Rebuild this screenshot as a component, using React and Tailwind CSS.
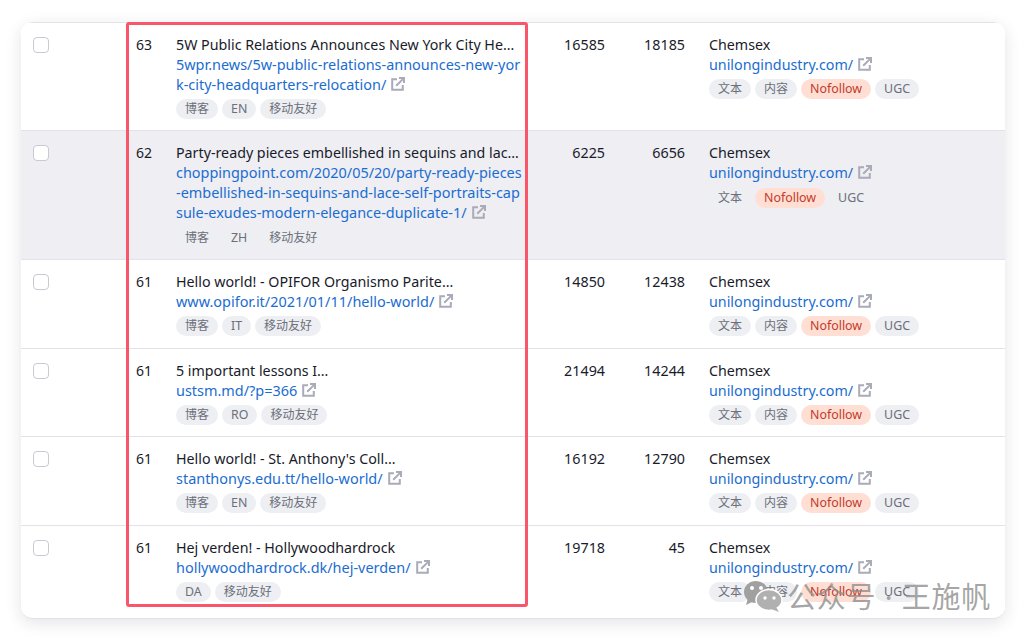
import React from "react";

const rows = [
  {
    score: 63,
    title: "5W Public Relations Announces New York City Headquarters Relocation",
    url: ["5wpr.news/5w-public-relations-announces-new-yor", "k-city-headquarters-relocation/"],
    tags: ["博客", "EN", "移动友好"],
    a: 16585,
    b: 18185,
    h: "h-[108px]",
  },
  {
    score: 62,
    title: "Party-ready pieces embellished in sequins and lace self portraits",
    url: [
      "choppingpoint.com/2020/05/20/party-ready-pieces",
      "-embellished-in-sequins-and-lace-self-portraits-cap",
      "sule-exudes-modern-elegance-duplicate-1/",
    ],
    tags: ["博客", "ZH", "移动友好"],
    a: 6225,
    b: 6656,
    h: "h-[129px]",
    hover: true,
    linkTags: ["文本", "Nofollow", "UGC"],
  },
  {
    score: 61,
    title: "Hello world! - OPIFOR Organismo Paritetico",
    clip: "w-[282px]",
    url: ["www.opifor.it/2021/01/11/hello-world/"],
    tags: ["博客", "IT", "移动友好"],
    a: 14850,
    b: 12438,
    h: "h-[89px]",
  },
  {
    score: 61,
    title: "5 important lessons I learned",
    clip: "w-[154px]",
    url: ["ustsm.md/?p=366"],
    tags: ["博客", "RO", "移动友好"],
    a: 21494,
    b: 14244,
    h: "h-[88px]",
  },
  {
    score: 61,
    title: "Hello world! - St. Anthony's College",
    clip: "w-[226px]",
    url: ["stanthonys.edu.tt/hello-world/"],
    tags: ["博客", "EN", "移动友好"],
    a: 16192,
    b: 12790,
    h: "h-[89px]",
  },
  {
    score: 61,
    title: "Hej verden! - Hollywoodhardrock",
    url: ["hollywoodhardrock.dk/hej-verden/"],
    tags: ["DA", "移动友好"],
    a: 19718,
    b: 45,
    h: "h-[89px]",
  },
];

function ExternalIcon() {
  return (
    <svg
      viewBox="0 0 14 14"
      className="inline-block w-[14px] h-[14px] ml-[5px] align-[-1px]"
      fill="none"
      stroke="#a9abb8"
      strokeWidth="2"
    >
      <path d="M6 2.2H1.2v10.6h10.6V8" />
      <path d="M5.2 8.8 12.4 1.6M8 1h5v5" />
    </svg>
  );
}

function Tag({ label }) {
  const red = label === "Nofollow";
  const latin = /[a-z]/i.test(label);
  return (
    <span
      className={
        "h-5 leading-5 px-[9px] rounded-full whitespace-nowrap " +
        (latin ? "text-[12.4px] " : "text-[12px] ") +
        (red ? "bg-[#ffdfd3] text-[#c4392b]" : "bg-[#edeff2] text-[#6c6e7a]")
      }
    >
      {label}
    </span>
  );
}

function Row({ row }) {
  const linkTags = row.linkTags || ["文本", "内容", "Nofollow", "UGC"];
  const tagGap = row.hover ? "mt-[5px]" : "mt-1";
  return (
    <div
      className={
        "flex border-t border-[#e2e2ea] pt-3 " + row.h + " " + (row.hover ? "bg-[#eeeef3]" : "bg-white")
      }
    >
      <div className="w-[115px] pl-3 pt-[2px] shrink-0">
        <div className="w-[16px] h-[16px] bg-white border border-[#c9c9d3] rounded-[4px]" />
      </div>
      <div className="w-[40px] shrink-0 leading-5">{row.score}</div>
      <div className="w-[348px] shrink-0">
        <div className={"truncate leading-5 text-[14.25px] " + (row.clip || "w-[345px]")}>{row.title}</div>
        <div className="text-[#1a6dd0] leading-5 text-[14.45px] whitespace-nowrap">
          {row.url.map((line, i) => (
            <div key={i}>
              {line}
              {i === row.url.length - 1 && <ExternalIcon />}
            </div>
          ))}
        </div>
        <div className={"flex gap-1 " + tagGap}>
          {row.tags.map((t) => (
            <Tag key={t} label={t} />
          ))}
        </div>
      </div>
      <div className="w-[81px] shrink-0 text-right leading-5 text-[14.3px]">{row.a}</div>
      <div className="w-[80px] shrink-0 text-right leading-5 text-[14.3px]">{row.b}</div>
      <div className="pl-6">
        <div className="leading-5 text-[14.25px]">Chemsex</div>
        <div className="text-[#1a6dd0] leading-5 text-[14.3px]">
          unilongindustry.com/
          <ExternalIcon />
        </div>
        <div className={"flex gap-1 " + tagGap}>
          {linkTags.map((t) => (
            <Tag key={t} label={t} />
          ))}
        </div>
      </div>
    </div>
  );
}

export default function App() {
  return (
    <div
      className="relative w-[1024px] h-[638px] overflow-hidden bg-white text-[14px] text-[#191b2a]"
      style={{ fontFamily: '"Noto Sans", "Noto Sans CJK SC", sans-serif' }}
    >
      <div className="absolute left-[21px] top-[22px] w-[984px] rounded-xl overflow-hidden bg-white shadow-[0_4px_16px_rgba(30,30,60,0.12)] border-b border-[#e2e2ea]">
        {rows.map((r, i) => (
          <Row key={i} row={r} />
        ))}
        <div className="h-1" />
      </div>

      {/* red highlight drawn over the table */}
      <div className="absolute left-[126px] top-[22px] w-[402px] h-[585px] border-[3px] border-[#f9566b] rounded-[3px]" />

      {/* watermark */}
      <div className="absolute left-[743px] top-[580px] flex items-center gap-[4px] text-[#8e8e8e]/80">
        <svg viewBox="0 0 40 32" className="w-[40px] h-[32px]">
          <ellipse cx="13" cy="12" rx="12" ry="11" fill="#a0a0a0" />
          <path d="M5 18 3 25l8-4z" fill="#a0a0a0" />
          <ellipse cx="26" cy="20" rx="13" ry="10.5" fill="#b0b0b0" stroke="#fff" strokeWidth="1.5" />
          <path d="M33 27l3 5-8-3z" fill="#b0b0b0" />
          <circle cx="9" cy="8" r="2" fill="#fff" />
          <circle cx="18" cy="8" r="2" fill="#fff" />
          <circle cx="22" cy="18" r="1.7" fill="#fff" />
          <circle cx="31" cy="18" r="1.7" fill="#fff" />
        </svg>
        <span className="text-[29px] leading-none whitespace-nowrap tracking-[0.8px]">公众号 · 王施帆</span>
      </div>
    </div>
  );
}
